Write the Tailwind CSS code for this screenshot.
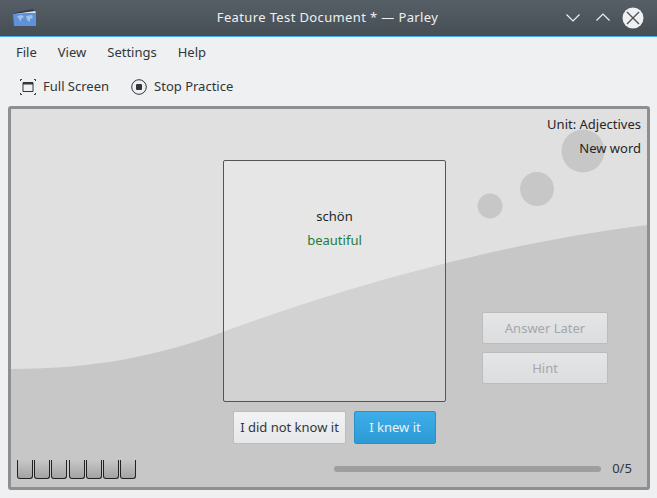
<!DOCTYPE html>
<html lang="en">
<head>
  <meta charset="UTF-8">
  <title>Feature Test Document * — Parley</title>
  <script src="https://cdn.jsdelivr.net/npm/@tailwindcss/browser@4"></script>
</head>
<body class="w-[657px] h-[498px] overflow-hidden bg-[#eff0f1] font-['Noto_Sans',sans-serif] text-[13px] text-[#31363b]">

  <!-- title bar -->
  <header class="h-[37px] flex items-center border-b border-[#3daee9] bg-gradient-to-b from-[#565f67] to-[#464e54] text-[#eff0f1]">
    <svg class="ml-[12px] w-[25px] h-[22px]" viewBox="0 0 25 22">
      <path d="M2 6 L21 2 L23 5 L23 8 L2 8 Z" fill="#2f3b4a"/>
      <path d="M2 7 L23 4 L24 6 L4 7 Z" fill="#dfe6ef"/>
      <path d="M1 7 L24 6 L24 19 L2 19 Z" fill="#5f92d8"/>
      <path d="M5 9 l5 -1 l2 2 l-3 2 l0 3 l-2 -3 Z M14 9 l6 -1 l1 3 l-3 1 l0 3 l-3 -2 Z" fill="#9fbfea"/>
    </svg>
    <div class="flex-1 text-center pl-[52px] tracking-[0.37px]">Feature Test Document * — Parley</div>
    <svg class="w-[14px] h-[8px] mr-[16px]" viewBox="0 0 14 8" fill="none" stroke="#eff0f1" stroke-width="1.2"><path d="M0.5 0.5 L7 7 L13.5 0.5"/></svg>
    <svg class="w-[14px] h-[8px] mr-[12px] mb-[3px]" viewBox="0 0 14 8" fill="none" stroke="#eff0f1" stroke-width="1.2"><path d="M0.5 7.5 L7 1 L13.5 7.5"/></svg>
    <svg class="w-[22px] h-[22px] mr-[13px]" viewBox="0 0 22 22"><circle cx="11" cy="11" r="10.5" fill="#eff0f1"/><path d="M5 5 L17 17 M17 5 L5 17" stroke="#4a5258" stroke-width="1.4"/></svg>
  </header>

  <!-- menu bar -->
  <nav class="h-[31px] flex items-center pl-[16px] gap-[21px]">
    <span>File</span><span>View</span><span>Settings</span><span>Help</span>
  </nav>

  <!-- tool bar -->
  <div class="h-[37px] flex items-center pl-[20px]">
    <svg class="w-[16px] h-[16px] mr-[7px]" viewBox="0 0 16 16" fill="none" stroke="#31363b">
      <path d="M3 3.5 H13 V12.5 H3 Z"/>
      <path d="M3 4.5 H13" stroke-width="2"/>
      <path d="M0.5 2 V0.5 H2 M14 0.5 H15.5 V2 M15.5 14 V15.5 H14 M2 15.5 H0.5 V14"/>
    </svg>
    <span>Full Screen</span>
    <svg class="w-[16px] h-[16px] ml-[22px] mr-[7px]" viewBox="0 0 16 16"><circle cx="8" cy="8" r="7.3" fill="none" stroke="#31363b"/><rect x="5" y="5" width="6" height="6" rx="1" fill="#31363b"/></svg>
    <span>Stop Practice</span>
  </div>

  <!-- practice area -->
  <main class="relative ml-[8px] mt-[1px] w-[642px] h-[384px] border-[3px] border-[#8f8f8f] rounded-[3px] overflow-hidden text-[#232629]">
    <svg class="absolute inset-0 w-[636px] h-[378px]" viewBox="0 0 636 378">
      <rect width="636" height="378" fill="#e0e0e0"/>
      <path d="M0 260 C85 260 150 246 212 223 C320 183 480 135 636 116 V378 H0 Z" fill="#c7c7c7"/>
      <circle cx="572" cy="42" r="21.5" fill="#c7c7c7"/>
      <circle cx="526" cy="80" r="17" fill="#c7c7c7"/>
      <circle cx="479" cy="97" r="12.5" fill="#c7c7c7"/>
    </svg>

    <div class="relative h-full flex flex-col">
      <div class="flex-1 flex">
        <div class="w-[212px]"></div>
        <div class="w-[223px] pt-[51px] flex flex-col items-center">
          <div class="w-[223px] h-[242px] border border-[#555] rounded-[2px] bg-white/20 flex flex-col items-center pt-[46px]">
            <div class="leading-[18px]">schön</div>
            <div class="leading-[18px] mt-[6px] text-[#1d7d3c]">beautiful</div>
          </div>
          <div class="flex gap-[8px] mt-[9px]">
            <button class="w-[113px] h-[33px] rounded-[2px] border border-[#bdbdbd] bg-gradient-to-b from-[#f2f3f4] to-[#e6e7e8] text-[#31363b]">I did not know it</button>
            <button class="w-[82px] h-[33px] rounded-[2px] border border-[#2a90c8] bg-gradient-to-b from-[#3daee9] to-[#2d9ad6] text-[#eff0f1]">I knew it</button>
          </div>
        </div>
        <div class="flex-1 flex flex-col items-end pr-[6px] pt-[6px]">
          <div class="leading-[18px]">Unit: Adjectives</div>
          <div class="leading-[18px] mt-[6px]">New word</div>
          <div class="flex flex-col gap-[8px] mt-[155px] mr-[33px]">
            <button class="w-[126px] h-[32px] pt-[1px] rounded-[2px] border border-[#bcbcbc] bg-gradient-to-b from-[#e4e5e6] to-[#dcddde] text-[#a5a7a9]">Answer Later</button>
            <button class="w-[126px] h-[32px] pt-[1px] rounded-[2px] border border-[#bcbcbc] bg-gradient-to-b from-[#e4e5e6] to-[#dcddde] text-[#a5a7a9]">Hint</button>
          </div>
        </div>
      </div>

      <div class="h-[28px] mb-[4px] flex items-center pl-[6px]">
        <div class="flex gap-[1.2px]">
          <div class="w-[16px] h-[19px] border border-t-0 border-[#222] rounded-b-[3px] bg-gradient-to-b from-[#c7c7c7] to-[#a3a3a3]"></div>
          <div class="w-[16px] h-[19px] border border-t-0 border-[#222] rounded-b-[3px] bg-gradient-to-b from-[#c7c7c7] to-[#a3a3a3]"></div>
          <div class="w-[16px] h-[19px] border border-t-0 border-[#222] rounded-b-[3px] bg-gradient-to-b from-[#c7c7c7] to-[#a3a3a3]"></div>
          <div class="w-[16px] h-[19px] border border-t-0 border-[#222] rounded-b-[3px] bg-gradient-to-b from-[#c7c7c7] to-[#a3a3a3]"></div>
          <div class="w-[16px] h-[19px] border border-t-0 border-[#222] rounded-b-[3px] bg-gradient-to-b from-[#c7c7c7] to-[#a3a3a3]"></div>
          <div class="w-[16px] h-[19px] border border-t-0 border-[#222] rounded-b-[3px] bg-gradient-to-b from-[#c7c7c7] to-[#a3a3a3]"></div>
          <div class="w-[16px] h-[19px] border border-t-0 border-[#222] rounded-b-[3px] bg-gradient-to-b from-[#c7c7c7] to-[#a3a3a3]"></div>
        </div>
        <div class="ml-[198px] w-[267px] h-[6px] rounded-full bg-[#9e9e9e]"></div>
        <div class="ml-[11px] text-[#31363b]">0/5</div>
      </div>
    </div>
  </main>
</body>
</html>
